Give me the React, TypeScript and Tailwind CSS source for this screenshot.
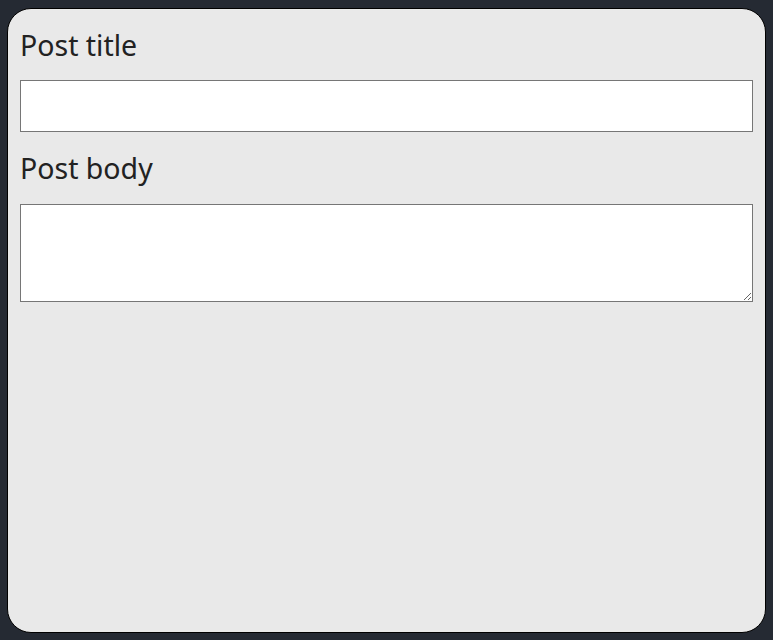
export default function App() {
  return (
    <div className="min-h-screen bg-[#252a33] pt-[8px] pb-[7px] px-[7px] flex flex-col" style={{ fontFamily: '"Noto Sans", "Open Sans", sans-serif' }}>
      <form className="flex-1 flex flex-col rounded-[24px] border border-black bg-[#e9e9e9] px-[12px] pt-[12px]">
        <label htmlFor="post-title" className="block text-[28.5px] leading-[48px] text-[#222] mb-[11px]">
          Post title
        </label>
        <input
          id="post-title"
          type="text"
          className="block w-full h-[52px] bg-white border border-[#767676] outline-none px-2"
        />
        <label htmlFor="post-body" className="block text-[28.5px] leading-[48px] text-[#222] mt-[12px] mb-[12px]">
          Post body
        </label>
        <textarea
          id="post-body"
          className="block w-full h-[98px] bg-white border border-[#767676] outline-none px-2"
        />
      </form>
    </div>
  );
}
